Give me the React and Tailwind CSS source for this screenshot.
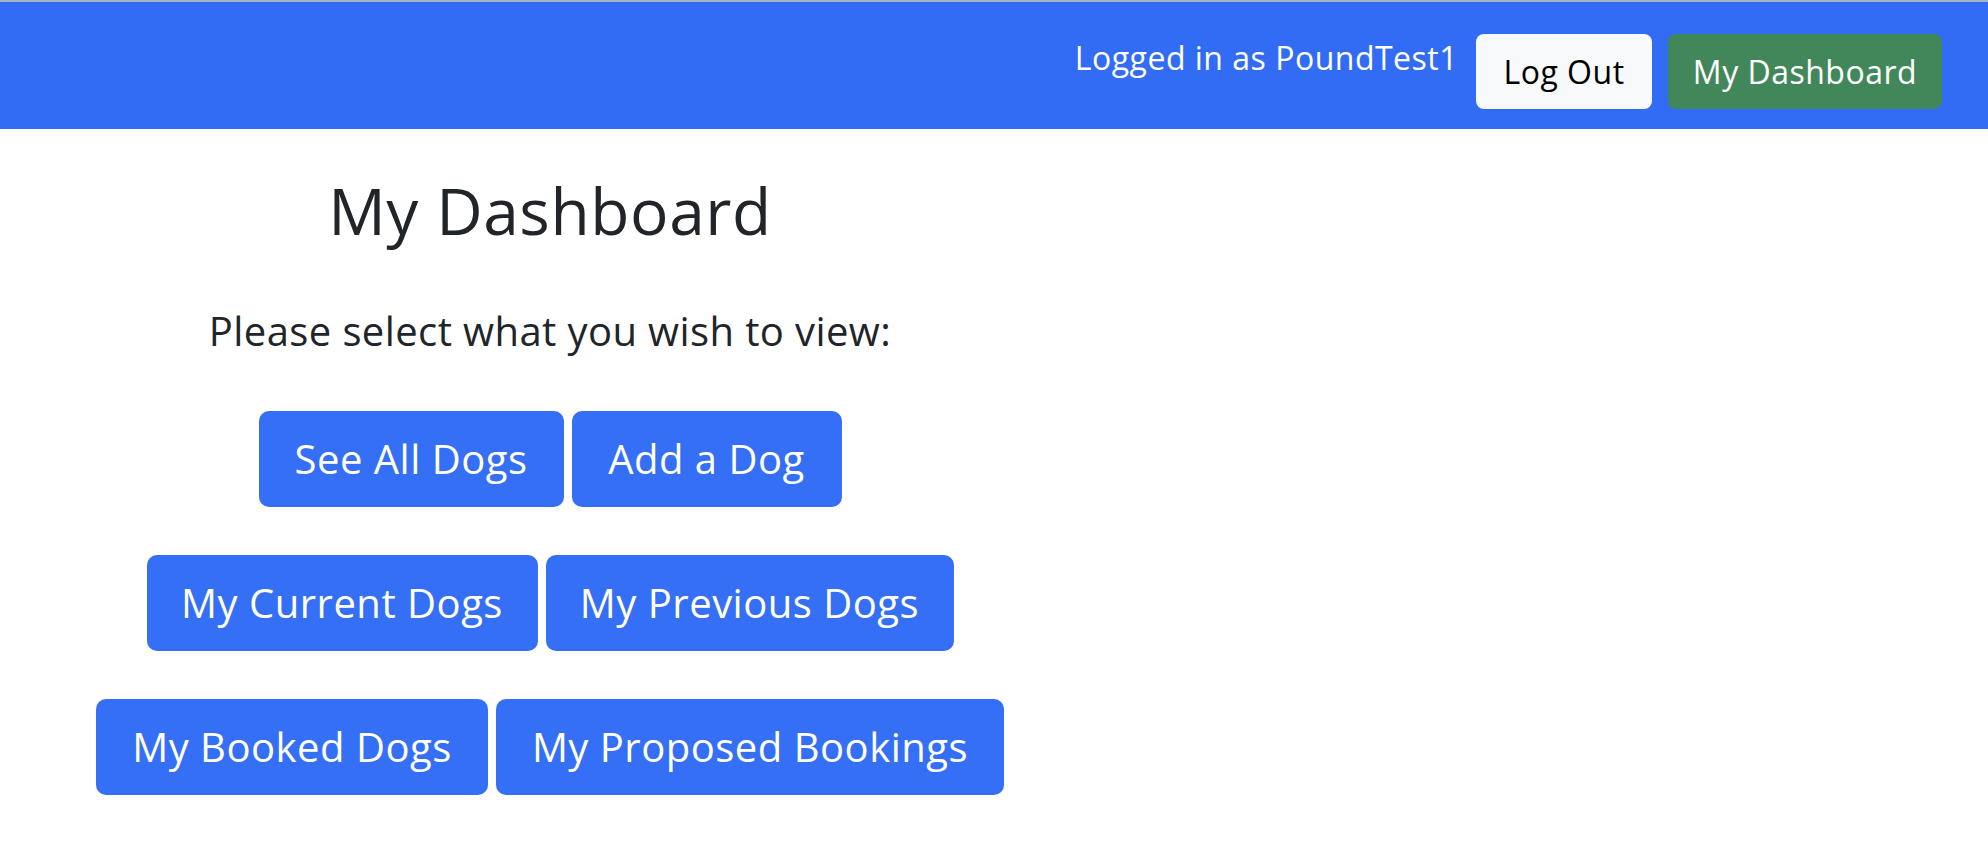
import React from "react";

const font = { fontFamily: '"Open Sans", "Noto Sans", sans-serif' };

function NavBar() {
    return (
        <nav className="flex h-[127px] items-start justify-end bg-[#326cf4] pr-[46px] pt-[32px]">
            <span className="mr-[18px] text-[32px] leading-[48px] tracking-[0.5px] text-white">
                Logged in as PoundTest1
            </span>
            <button className="mr-[16px] h-[75px] w-[176px] rounded-[8px] bg-[#f8f9fa] text-[32px] leading-[48px] tracking-[0.5px] text-black">
                Log Out
            </button>
            <button className="h-[75px] w-[274px] rounded-[8px] bg-[#42875a] text-[32px] leading-[48px] tracking-[0.5px] text-white">
                My Dashboard
            </button>
        </nav>
    );
}

function BigButton({ label, width }) {
    return (
        <button
            className={`${width} h-[96px] rounded-[10px] bg-[#356ff5] text-[40px] leading-[60px] tracking-[0.5px] text-white`}
        >
            {label}
        </button>
    );
}

export default function App() {
    const rows = [
        [
            { label: "See All Dogs", width: "w-[305px]" },
            { label: "Add a Dog", width: "w-[270px]" },
        ],
        [
            { label: "My Current Dogs", width: "w-[391px]" },
            { label: "My Previous Dogs", width: "w-[408px]" },
        ],
        [
            { label: "My Booked Dogs", width: "w-[392px]" },
            { label: "My Proposed Bookings", width: "w-[508px]" },
        ],
    ];

    return (
        <div className="min-h-screen bg-white text-[#212529]" style={font}>
            <div className="h-[2px] bg-[#a3b5c2]" />
            <NavBar />
            <main className="w-[1100px] pt-[43px] text-center">
                <h2 className="text-[64px] leading-[77px] tracking-[0.6px]">My Dashboard</h2>
                <p className="mt-[52px] text-[40px] leading-[60px] tracking-[0.4px]">
                    Please select what you wish to view:
                </p>
                <div className="mt-[50px] flex flex-col items-center gap-[48px]">
                    {rows.map((row, i) => (
                        <div key={i} className="flex gap-[8px]">
                            {row.map(b => (
                                <BigButton key={b.label} label={b.label} width={b.width} />
                            ))}
                        </div>
                    ))}
                </div>
            </main>
        </div>
    );
}
